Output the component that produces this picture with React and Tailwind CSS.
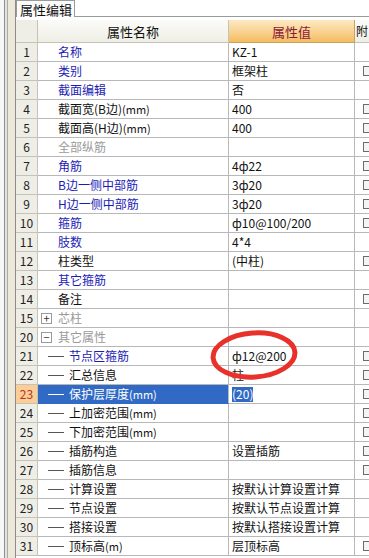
import React from "react";

const rows = [
  { n: "1", name: "名称", tone: "blue", value: "KZ-1" },
  { n: "2", name: "类别", tone: "blue", value: "框架柱", box: true },
  { n: "3", name: "截面编辑", tone: "blue", value: "否" },
  { n: "4", name: "截面宽(B边)", unit: "(mm)", tone: "black", value: "400", box: true },
  { n: "5", name: "截面高(H边)", unit: "(mm)", tone: "black", value: "400", box: true },
  { n: "6", name: "全部纵筋", tone: "gray", value: "", box: true },
  { n: "7", name: "角筋", tone: "blue", value: "4ф22", box: true },
  { n: "8", name: "B边一侧中部筋", tone: "blue", value: "3ф20", box: true },
  { n: "9", name: "H边一侧中部筋", tone: "blue", value: "3ф20", box: true },
  { n: "10", name: "箍筋", tone: "blue", value: "ф10@100/200", box: true },
  { n: "11", name: "肢数", tone: "blue", value: "4*4" },
  { n: "12", name: "柱类型", tone: "black", value: "(中柱)", box: true },
  { n: "13", name: "其它箍筋", tone: "blue", value: "" },
  { n: "14", name: "备注", tone: "black", value: "", box: true },
  { n: "15", name: "芯柱", tone: "gray", value: "", expander: "+" },
  { n: "20", name: "其它属性", tone: "gray", value: "", expander: "−" },
  { n: "21", name: "节点区箍筋", tone: "blue", value: "ф12@200", box: true, tree: true },
  { n: "22", name: "汇总信息", tone: "black", value: "柱", box: true, tree: true },
  { n: "23", name: "保护层厚度", unit: "(mm)", tone: "black", value: "(20)", box: true, tree: true, selected: true },
  { n: "24", name: "上加密范围", unit: "(mm)", tone: "black", value: "", box: true, tree: true },
  { n: "25", name: "下加密范围", unit: "(mm)", tone: "black", value: "", box: true, tree: true },
  { n: "26", name: "插筋构造", tone: "black", value: "设置插筋", box: true, tree: true },
  { n: "27", name: "插筋信息", tone: "black", value: "", box: true, tree: true },
  { n: "28", name: "计算设置", tone: "black", value: "按默认计算设置计算", tree: true },
  { n: "29", name: "节点设置", tone: "black", value: "按默认节点设置计算", tree: true },
  { n: "30", name: "搭接设置", tone: "black", value: "按默认搭接设置计算", tree: true },
  { n: "31", name: "顶标高", unit: "(m)", tone: "black", value: "层顶标高", box: true, tree: true },
];

const toneClass = {
  blue: "text-[#1c1cb4]",
  black: "text-[#111111]",
  gray: "text-[#9a9a9a]",
};

function Name({ row }) {
  return (
    <span className="whitespace-nowrap">
      {row.name}
      {row.unit && <span className="text-[11px]">{row.unit}</span>}
    </span>
  );
}

function Row({ row }) {
  const sel = row.selected;
  return (
    <div className="grid grid-cols-[22px_191px_126px_40px] h-[19px]">
      <div
        className={
          "flex items-center justify-center border-r border-b border-[#c4c3b8] " +
          (sel ? "bg-[#fbcd97] text-[#b5352a]" : "bg-[#efeee6] text-[#222]")
        }
      >
        {row.n}
      </div>
      <div
        className={
          "flex items-center border-r border-b border-[#b8b8b8] " +
          (sel ? "bg-[#316ac5] text-white border-b-[#316ac5]" : "bg-white " + toneClass[row.tone])
        }
      >
        {row.expander ? (
          <>
            <span className="ml-[3px] w-[11px] h-[11px] border border-[#9a9a9a] bg-white flex items-center justify-center text-[11px] leading-none text-[#333]">
              {row.expander}
            </span>
            <span className="ml-[6px]">{row.name}</span>
          </>
        ) : row.tree ? (
          <>
            <span className={"ml-[10px] w-[16px] h-px " + (sel ? "bg-white" : "bg-[#555]")} />
            <span className="ml-[5px]">
              <Name row={row} />
            </span>
          </>
        ) : (
          <span className="ml-[20px]">
            <Name row={row} />
          </span>
        )}
      </div>
      <div className="flex items-center border-r border-b border-[#b8b8b8] bg-white text-[#111] pl-[3px] whitespace-nowrap">
        {sel ? <span className="bg-[#316ac5] text-white h-[15px] flex items-center">{row.value}</span> : row.value}
      </div>
      <div className="flex items-center border-b border-[#b8b8b8] bg-white">
        {row.box && <span className="ml-[8px] w-[11px] h-[10px] border border-[#6b6b6b] bg-[#f4f4f4]" />}
      </div>
    </div>
  );
}

export default function App() {
  return (
    <div
      className="w-[369px] h-[558px] overflow-hidden flex bg-white text-[12px] leading-none"
      style={{ fontFamily: '"SimSun", "Noto Sans CJK SC", sans-serif' }}
    >
      {/* left frame */}
      <div className="flex w-[16px] shrink-0">
        <div className="w-[4px] bg-[#f6f6f6]" />
        <div className="w-px bg-[#8e8e8e]" />
        <div className="w-[2px] bg-[#e2e2e2]" />
        <div className="w-px bg-[#a9a9a9]" />
        <div className="w-[7px] bg-[#ece9d8]" />
        <div className="w-px bg-[#8c8c8c]" />
      </div>

      <div className="flex flex-col flex-1 min-w-0">
        {/* tab strip */}
        <div className="flex h-[17px] shrink-0 bg-white">
          <div className="w-[59px] h-[17px] border-t border-r border-l border-[#9a9a9a] bg-[#fcfcfc] flex items-center pl-[3px] text-[13px] text-[#111]">
            属性编辑
          </div>
          <div className="flex-1 border-b border-[#9a9a9a]" />
        </div>
        <div className="h-[3px] shrink-0 bg-white" />

        {/* header */}
        <div className="grid grid-cols-[22px_191px_126px_40px] h-[23px] shrink-0">
          <div className="bg-[#efeee6] border-r border-b border-[#c4c3b8]" />
          <div className="bg-gradient-to-b from-[#fbfbf8] to-[#efeee6] border-r border-b border-[#c4c3b8] flex items-center justify-center text-[13px] text-[#111]">
            属性名称
          </div>
          <div className="bg-gradient-to-b from-[#fde9c2] to-[#f4bd5f] border-r border-b border-[#c8a060] flex items-center justify-center text-[13px] text-[#8a1838]">
            属性值
          </div>
          <div className="bg-gradient-to-b from-[#fbfbf8] to-[#efeee6] border-b border-[#c4c3b8] flex items-center pl-[1px] text-[12px] text-[#111]">
            附
          </div>
        </div>

        {/* rows */}
        <div className="relative flex flex-col">
          {rows.map((r) => (
            <Row key={r.n} row={r} />
          ))}

          {/* red annotation ellipse */}
          <svg
            className="absolute left-[192px] top-[285px] pointer-events-none"
            width="92"
            height="56"
            viewBox="0 0 92 56"
          >
            <ellipse cx="46" cy="27" rx="41" ry="22" fill="none" stroke="#e8312b" strokeWidth="5" transform="rotate(-4 46 27)" />
          </svg>
        </div>
      </div>
    </div>
  );
}
